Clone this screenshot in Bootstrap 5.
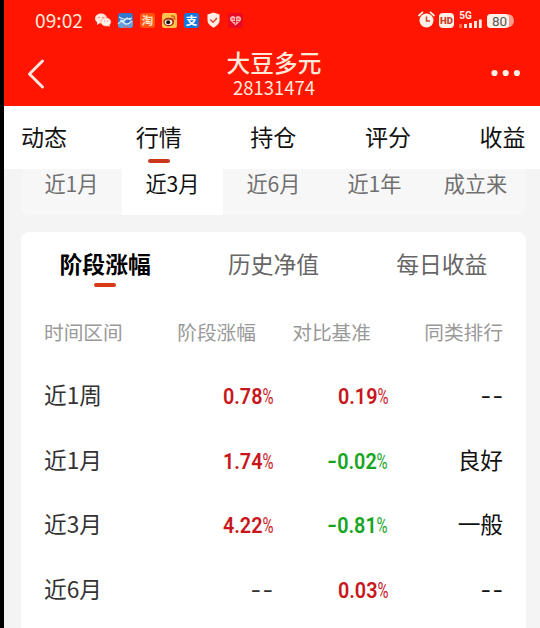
<!DOCTYPE html>
<html lang="zh-CN">
<head>
<meta charset="utf-8">
<meta name="viewport" content="width=device-width, initial-scale=1">
<title>大豆多元</title>
<link href="https://cdn.jsdelivr.net/npm/bootstrap@5.3.0/dist/css/bootstrap.min.css" rel="stylesheet">
<style>
body{font-family:"Noto Sans CJK SC",sans-serif;background:#f4f4f4;color:#111;width:540px;height:628px;overflow:hidden}
.screen{height:628px;border-left:4px solid #000;overflow:hidden}
.top-area{background:#ff1500;height:106px;color:#ffe9da}
.status-bar{height:40px;padding:0 26px 0 31px}
.clock{font-size:19.2px;line-height:40px;width:60px}
.apps{gap:7px}
.apps svg,.signals svg{display:block;overflow:visible}
.title-bar{height:66px;padding:0 20px 0 23px}
.fund-name{font-size:23.7px;line-height:27px;font-weight:500;margin-top:9px}
.fund-code{font-size:18.5px;line-height:23px}
.main-tabs{height:63px;padding:0 0 0 17px;width:521.5px;font-size:23px;line-height:61px}
.top-nav{background:#fff}
.main-tabs span,.sub-tabs span{position:relative}
.main-tabs .active::after,.sub-tabs .active::after{content:"";position:absolute;left:50%;height:4px;border-radius:2px}
.main-tabs .active::after{width:22px;margin-left:-11px;top:53px;background:#c9371e}
.sub-tabs .active::after{width:22px;margin-left:-11px;top:51px;background:#d63a16}
.periods{margin:0 14px 0 17px;height:46px;background:#f7f7f7;border-radius:0 0 7px 7px;font-size:21.2px;line-height:28px;color:#707070;overflow:hidden}
.periods .active{background:#fff;color:#111}
.panel{margin:17px 14px 0 17px;height:420px;background:#fff;border-radius:8px 8px 0 0}
.sub-tabs{height:68px;font-size:22.8px;line-height:64px;color:#666}
.sub-tabs .active{color:#000;font-weight:700}
.grid-row{display:grid;grid-template-columns:132px 97px 115px 115px;padding-left:23px;height:64.7px;line-height:64.7px;font-size:22.7px;color:#333;text-align:right;white-space:nowrap}
.grid-row>:first-child{text-align:left}
.grid-row>:last-child{color:#111}
.grid-row.heads{height:63px;line-height:63px;font-size:19.7px}
.grid-row.heads>*{color:#999}
.heads>:nth-child(2),.heads>:nth-child(3){padding-right:17px}
.num{font-family:Roboto,sans-serif;font-weight:600;font-size:22.5px;line-height:1;display:inline-block;transform:scaleX(.88);transform-origin:right}
.num i,.num s{font-style:normal;text-decoration:none;display:inline-block;transform-origin:right}
.num i{font-weight:400;transform:scaleX(.76);margin-left:-4px}
.num s{transform:scaleX(1.35)}
.up{color:#c8161d}.down{color:#16a51e}
.none{font-family:Roboto,sans-serif;font-size:24px;letter-spacing:2.5px;margin-right:-2px;display:inline-block;transform:scaleX(1.3);transform-origin:right}
</style>
<script src="https://cdn.jsdelivr.net/npm/bootstrap@5.3.0/dist/js/bootstrap.bundle.min.js"></script>
</head>
<body>
<main class="screen">
<header class="top-area">
<div class="status-bar d-flex align-items-center">
<span class="clock">09:02</span>
<div class="apps d-flex align-items-center">
<svg width="16" height="16" viewBox="0 0 16 16"><ellipse cx="6" cy="6.5" rx="6" ry="5" fill="#ffe9df"/><path d="M2 10l0 3 3-2z" fill="#ffe9df"/><ellipse cx="11" cy="10" rx="5" ry="4.2" fill="#fff2ea" stroke="#ff6b55" stroke-width=".5"/><path d="M12 13l2.5 2 0-3z" fill="#fff2ea"/><g fill="#ed5c46"><circle cx="4" cy="5.5" r=".7"/><circle cx="8" cy="5.500" r=".7"/><circle cx="9.500" cy="9" r=".6"/><circle cx="12.500" cy="9" r=".6"/></g></svg>
<svg width="15" height="15" viewBox="0 0 15 15"><rect width="15" height="15" rx="3" fill="#2f78cb"/><path d="M0 10q4-5 7-1t8-2v5q0 3-3 3H3q-3 0-3-3z" fill="#659fdb"/><path d="M1 4l4 2 4 0 5-1M2 7l4 1 3-3 4 2M0 11q3-4 6-1t8-2" fill="none" stroke="#e4eef7" stroke-width="1.200"/><path d="M5 14h6" stroke="#df6965"/></svg>
<svg width="15" height="15" viewBox="0 0 15 15"><rect width="15" height="15" rx="3" fill="#ff5511"/><text x="7.500" y="11.600" text-anchor="middle" font-size="11.500" font-weight="700" fill="#ffe0c6">淘</text></svg>
<svg width="15" height="15" viewBox="0 0 15 15"><rect width="15" height="15" rx="2.500" fill="#ffc24b"/><ellipse cx="6.700" cy="9" rx="5.400" ry="4.200" fill="#a92b16"/><ellipse cx="6.500" cy="9.300" rx="3.800" ry="2.800" fill="#fff0dc"/><circle cx="6.200" cy="9.300" r="2" fill="#181210"/><path d="M9 3q4-1 4 4M9.300 5q2-.4 2 2" fill="none" stroke="#d64c17" stroke-width="1.100"/></svg>
<svg width="15" height="15" viewBox="0 0 15 15"><rect width="15" height="15" rx="2.500" fill="#1678dd"/><text x="7.500" y="11.600" text-anchor="middle" font-size="11.500" font-weight="700" fill="#fff">支</text></svg>
<svg width="15" height="16" viewBox="0 0 15 16"><path d="M7.500.5l6 2v6q0 4-6 7.200-6-3.200-6-7.200v-6z" fill="#ffefe7"/><path d="M4.300 7.500l2.700 2.700 4-4.200" fill="none" stroke="#d94532" stroke-width="1.500"/></svg>
<svg width="15" height="15" viewBox="0 0 15 15"><rect width="15" height="15" rx="3" fill="#e70a22"/><path d="M7.500 12.500L2.500 7.800Q.8 5 3.300 3.400 6 2.300 7.500 4.600 9 2.300 11.700 3.400 14.200 5 12.500 7.800z" fill="#ffb3b0"/><path d="M3.500 6h2.500M9 6h2.500M5 8.500h2M8.500 8.500h2M7.500 4.600v6" stroke="#e70a22" stroke-width=".9"/></svg>
</div>
<div class="signals d-flex align-items-center ms-auto">
<svg width="96" height="20" viewBox="0 0 96 20"><circle cx="8.500" cy="10.500" r="7" fill="#fff0e8"/><path d="M1 5.500l3.500-3.200M16 5.500l-3.500-3.200" stroke="#fff0e8" stroke-width="1.800" stroke-linecap="round"/><path d="M8.500 6.500v4.500h3.500" fill="none" stroke="#c9432d" stroke-width="1.500"/><rect x="21" y="3" width="15" height="15" rx="4" fill="#fff0e8"/><text x="28.500" y="14" text-anchor="middle" font-family="Roboto" font-size="9.500" font-weight="900" fill="#c83d28">HD</text><text x="41.300" y="9" font-family="Roboto" font-size="10" font-weight="700" fill="#fff0e8">5G</text><path d="M47.500 18v-4M52.500 18v-5M57.500 18v-7M62.300 18V9.500" stroke="#fff0e8" stroke-width="2.800"/><path d="M42.500 18v-4" stroke="#ff6b50" stroke-width="2.800"/><path d="M90 4q6 1 6 7 0 5-6 6.500z" fill="#ff9d8d"/><rect x="69" y="4" width="22" height="14" rx="3.500" fill="#fff0e8"/><text x="81.500" y="15.800" text-anchor="middle" font-family="Roboto" font-size="13.500" fill="#555">80</text></svg>
</div>
</div>
<div class="title-bar d-flex justify-content-between">
<svg width="18" height="34" viewBox="0 0 18 34" style="margin-top:17px"><path d="M15.500 4L2.500 17l13 13" fill="none" stroke="#ffe6dc" stroke-width="3" stroke-linecap="round" stroke-linejoin="round"/></svg>
<div class="text-center ms-2 ps-1"><div class="fund-name">大豆多元</div><div class="fund-code">28131474</div></div>
<svg width="29" height="8" viewBox="0 0 29 8" style="margin-top:29px"><g fill="#fff0e8"><circle cx="3.500" cy="4" r="3.100"/><circle cx="14.700" cy="4" r="3.100"/><circle cx="25.900" cy="4" r="3.100"/></g></svg>
</div>
</header>
<nav class="top-nav"><div class="main-tabs d-flex justify-content-between"><span>动态</span><span class="active">行情</span><span>持仓</span><span>评分</span><span>收益</span></div></nav>
<div class="periods d-flex text-center"><span class="flex-fill w-100">近1月</span><span class="flex-fill w-100 active">近3月</span><span class="flex-fill w-100">近6月</span><span class="flex-fill w-100">近1年</span><span class="flex-fill w-100">成立来</span></div>
<section class="panel">
<div class="sub-tabs row g-0 text-center"><span class="col active">阶段涨幅</span><span class="col">历史净值</span><span class="col">每日收益</span></div>
<div class="grid-row heads"><span>时间区间</span><span>阶段涨幅</span><span>对比基准</span><span>同类排行</span></div>
<div class="grid-row"><span>近1周</span><span><b class="num up">0.78<i>%</i></b></span><span><b class="num up">0.19<i>%</i></b></span><span><span class="none">--</span></span></div>
<div class="grid-row"><span>近1月</span><span><b class="num up">1.74<i>%</i></b></span><span><b class="num down"><s>-</s>0.02<i>%</i></b></span><span>良好</span></div>
<div class="grid-row"><span>近3月</span><span><b class="num up">4.22<i>%</i></b></span><span><b class="num down"><s>-</s>0.81<i>%</i></b></span><span>一般</span></div>
<div class="grid-row"><span>近6月</span><span><span class="none">--</span></span><span><b class="num up">0.03<i>%</i></b></span><span><span class="none">--</span></span></div>
</section>
</main>
</body>
</html>
